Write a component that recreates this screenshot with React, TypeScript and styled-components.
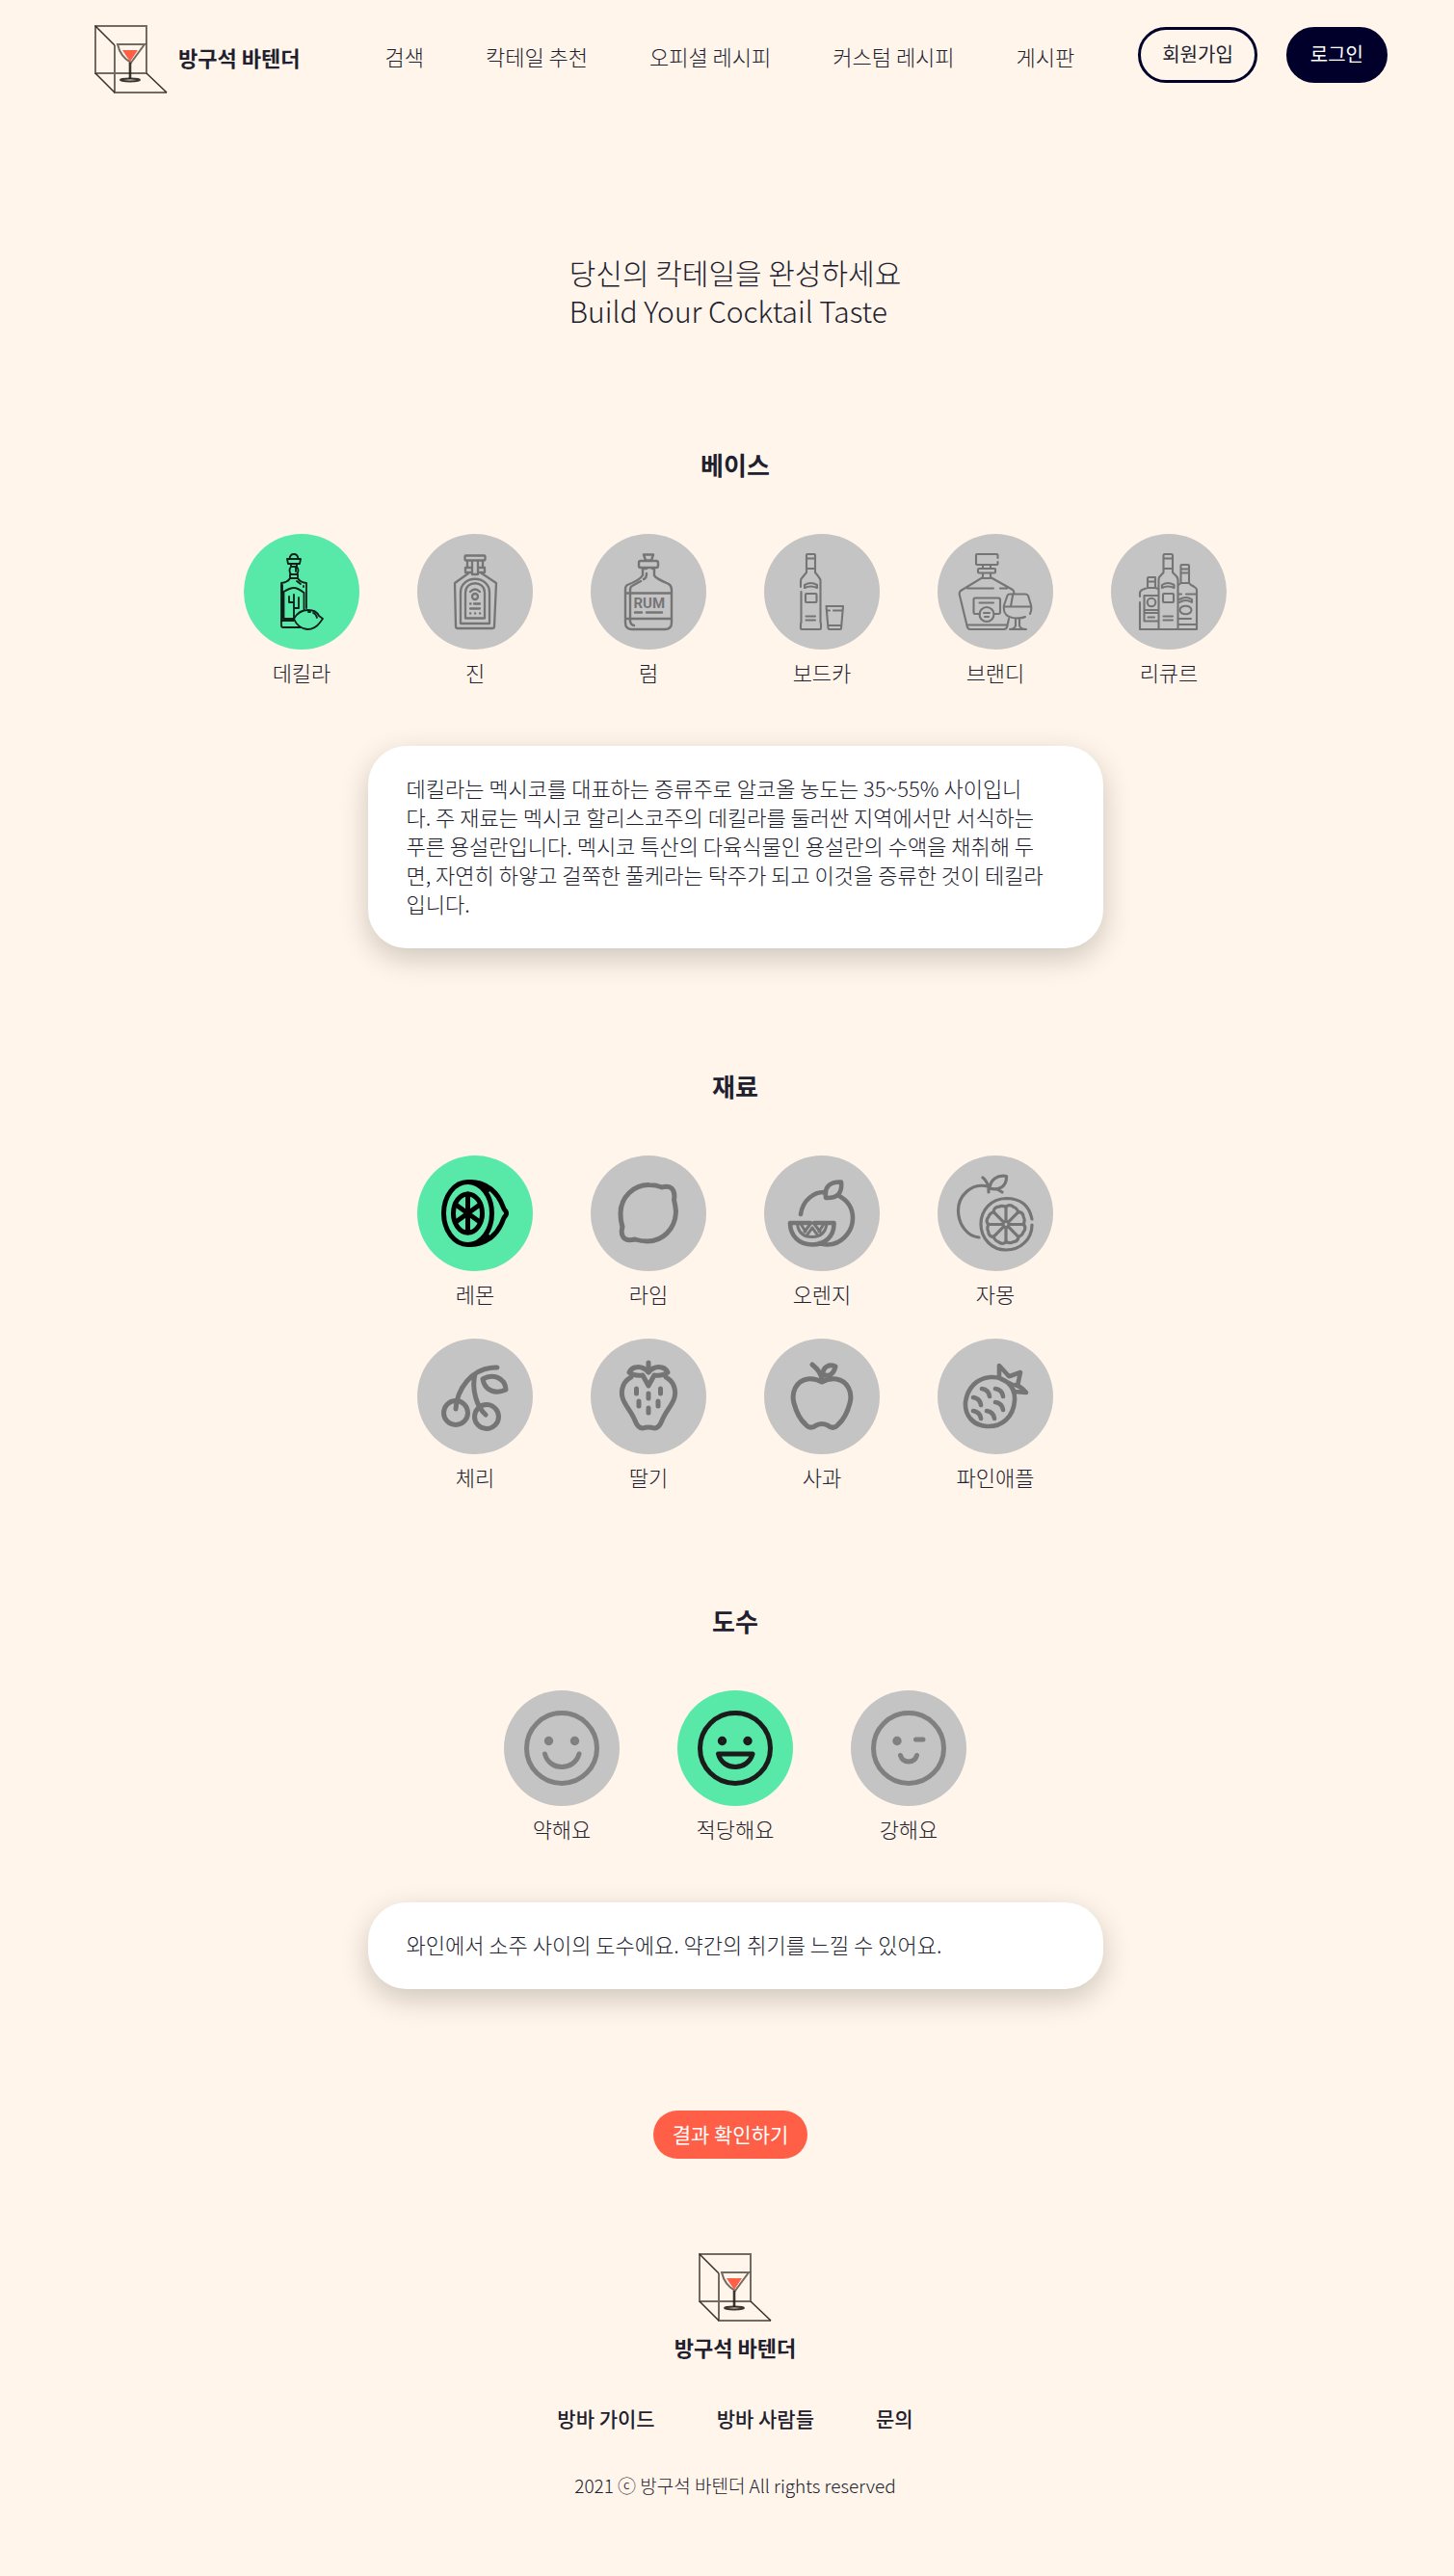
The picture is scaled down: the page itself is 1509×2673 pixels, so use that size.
import React, { useState } from "react";
import styled, { createGlobalStyle } from "styled-components";

const color = {
  page: "#fff5ea",
  ink: "#20202e",
  navy: "#00002b",
  coral: "#ff5f47",
  mint: "#58e9a9",
  idle: "#c4c4c4",
};

const GlobalStyle = createGlobalStyle`
  *, *::before, *::after { box-sizing: border-box; }
  body {
    margin: 0;
    background: ${color.page};
    color: ${color.ink};
    font-family: "Noto Sans CJK KR", "Noto Sans", sans-serif;
    font-size: 20px;
    font-weight: 300;
    line-height: 30px;
  }
  a { color: inherit; text-decoration: none; }
  button { font: inherit; color: inherit; cursor: pointer; }
  h1, h2, p, ul { margin: 0; padding: 0; }
`;

const Header = styled.header`
  display: flex;
  align-items: flex-start;
  padding: 26px 69px 0 98px;
`;

const Brand = styled.a`
  display: flex;
  align-items: center;
  gap: 10px;
  font-size: 22px;
  font-weight: 700;
  line-height: 30px;
  white-space: nowrap;
`;

const BrandName = styled.span`
  padding-bottom: 6px;
`;

const MainNav = styled.nav`
  display: flex;
  gap: 64px;
  margin-left: 88px;
  font-size: 22px;
  line-height: 64px;
  white-space: nowrap;
`;

const Actions = styled.div`
  display: flex;
  gap: 30px;
  margin-top: 2px;
  margin-left: auto;
`;

const PillButton = styled.button<{ $filled?: boolean }>`
  height: 58px;
  padding: 0 22px 2px;
  border: 3px solid ${color.navy};
  border-radius: 30px;
  background: ${(p) => (p.$filled ? color.navy : "transparent")};
  color: ${(p) => (p.$filled ? "#fff" : color.ink)};
  font-size: 20px;
  font-weight: 400;
  white-space: nowrap;
`;

const Main = styled.main`
  display: flex;
  flex-direction: column;
  align-items: center;
  padding-left: 17px;
`;

const Title = styled.h1`
  margin-top: 164px;
  font-size: 30px;
  font-weight: 300;
  line-height: 40px;
`;

const Section = styled.section<{ $space: number }>`
  display: flex;
  flex-direction: column;
  align-items: center;
  width: 100%;
  margin-top: ${(p) => p.$space}px;
`;

const Heading = styled.h2`
  margin-bottom: 52px;
  font-size: 26px;
  font-weight: 700;
  line-height: 40px;
`;

const Choices = styled.div<{ $columns: number }>`
  display: grid;
  grid-template-columns: repeat(${(p) => p.$columns}, 120px);
  gap: 30px 60px;
`;

const Choice = styled.button`
  display: flex;
  flex-direction: column;
  align-items: center;
  gap: 8px;
  padding: 0 0 2px;
  border: 0;
  background: none;
  font-size: 22px;
  line-height: 30px;
  white-space: nowrap;
`;

const Disc = styled.span<{ $on: boolean }>`
  display: block;
  width: 120px;
  height: 120px;
  border-radius: 50%;
  background: ${(p) => (p.$on ? color.mint : color.idle)};

  svg {
    display: block;
    opacity: ${(p) => (p.$on ? 1 : 0.4)};
  }
`;

const Card = styled.p`
  width: 100%;
  max-width: 763px;
  margin-top: 60px;
  padding: 28px 40px 32px;
  border-radius: 40px;
  background: #fff;
  box-shadow: 0 10px 30px rgba(0, 0, 0, 0.2);
  font-size: 22px;
  white-space: pre-line;
`;

const ResultButton = styled.button`
  height: 50px;
  margin-top: 126px;
  margin-right: 10px;
  padding: 0 20px 2px;
  border: 0;
  border-radius: 25px;
  background: ${color.coral};
  color: #fff;
  font-size: 21px;
  font-weight: 400;
`;

const Footer = styled.footer`
  display: flex;
  flex-direction: column;
  align-items: center;
  padding: 98px 0 79px 17px;
`;

const FooterName = styled.strong`
  margin-top: 10px;
  font-size: 22px;
  font-weight: 700;
`;

const FooterNav = styled.nav`
  display: flex;
  gap: 64px;
  margin-top: 44px;
  font-size: 21px;
  font-weight: 500;
`;

const Copyright = styled.small`
  margin-top: 40px;
  font-size: 19px;
`;

const Logo = () => (
  <svg width="77" height="72" viewBox="0 0 77 72" fill="none" stroke="#27211c" strokeOpacity="0.65" strokeWidth="2" aria-hidden="true">
    <path d="M1 1H54V50H1ZM21 21V70H75" />
    <path d="M1 1L21 21M1 50L21 70M54 50L75 70" strokeWidth="1.600" strokeOpacity="0.9" />
    <path d="M24 20H52L38 39Q27 33 24 20Z" />
    <path d="M29 26H45L37 38Z" fill={color.coral} stroke="none" />
    <path d="M37 39V56" strokeWidth="2.600" strokeOpacity="0.9" />
    <ellipse cx="37" cy="57" rx="10" ry="1.400" strokeOpacity="0.9" />
  </svg>
);

const Icon = ({ weight, tone = "#000", children }: { weight: number; tone?: string; children: React.ReactNode }) => (
  <svg
    width="120"
    height="120"
    viewBox="0 0 120 120"
    fill="none"
    stroke={tone}
    strokeWidth={weight}
    strokeLinecap="round"
    strokeLinejoin="round"
    aria-hidden="true"
  >
    {children}
  </svg>
);

const Tequila = () => (
  <Icon weight={1.800} tone="#0b2019">
    <path d="M47.500 26Q48 21 52 21T56.500 26M45 26H59L58 31H46ZM49 31V34M55 31V34M49 34Q46 38 49 42H55Q58 38 55 34ZM54 35V39" />
    <path d="M48 42V46Q46 50 39 51V95Q39 97 41 97H59M56 42V46Q58 50 65 51V77M48 46H56M55 49L59 52M62 54V55" />
    <path d="M62.500 78V61Q56 56 52 56Q48 56 41.500 60V88H52M52 63V87M47 65V71H52M57 66V77H52M39 90H52M40 53V88" />
    <path d="M52 88Q57 79 67 79Q75 79 78 85L82 88L79 92Q74 99 66 99Q56 98 52 88ZM67 81H69M72 82Q75 83 76 87" />
  </Icon>
);

const Gin = () => (
  <Icon weight={2.300}>
    <rect x="49.500" y="22.500" width="21" height="5" rx="1" />
    <path d="M52 28V35M68 28V35M57 28V42H63V28M57 35H50V40H57M63 35H70V40H63" />
    <path d="M53 41L39 51L40 96Q40 98 42 98H78Q80 98 80 96L82 51L67 41" />
    <path d="M45 93V61C45 42 75 42 75 61V93Z" />
    <path d="M50 87.500V61C50 48 70 48 70 61V87.500Z" />
    <path d="M55 60Q60 55 65 60M55 72.500H55.500M59 72.500H65M55 77.500H65M55 82.500H55.200M60 82.500H60.200M65 82.500H65.200" />
    <circle cx="60" cy="65" r="3" />
  </Icon>
);

const Rum = () => (
  <Icon weight={2.400}>
    <path d="M55 21.500H65L63 27.500H57ZM52 28H68Q70 28 70 30V33Q70 35 68 35H52Q50 35 50 33V30Q50 28 52 28Z" />
    <path d="M54 36V43Q51 48 38 53Q36 54 36 58V92Q36 99 43 99H77Q84 99 84 92V58Q84 54 81 52Q67 46 66 43V36H64M36 61.500H84M36 88H84M56 36H58" />
    <path d="M58 41Q58 46 55 47M52 49L43 54Q41 55 41 58V91Q42 95 45 95M46 81.500H53M58 81.500H74" />
    <text x="44.500" y="77" fontFamily="Roboto, sans-serif" fontSize="15" fontWeight="700" fill="#000" stroke="none">RUM</text>
  </Icon>
);

const Vodka = () => (
  <Icon weight={2.100}>
    <path d="M44 36V22Q44 21 45 21H52Q53 21 53 22V36ZM44 25.500H53M44 36V40L39 46Q38 47 38 49V55M38.500 60V92L38 93V98Q38 99 39 99H58Q59 99 59 98V93L58.500 92V48Q58 46 53 40V36" />
    <path d="M42 53Q48.500 49 55 53V56Q48.500 53 42 56Z" />
    <rect x="43" y="62" width="11.500" height="9" rx="1" />
    <path d="M43.500 85.500H53M43.500 89.500H53M64.500 75H82L80 98Q80 99 79 99H67.500L66.500 98L64.500 75M66 79.500H68M72 79.500H81M67 95H80" />
  </Icon>
);

const Brandy = () => (
  <Icon weight={2.100}>
    <path d="M62.500 25V22Q62.500 21 61 21H41Q40 21 40 22V31Q40 32 41 32H61.500Q62.500 32 62.500 31V29M47 32V36M55 32V36" />
    <rect x="42" y="36" width="18" height="4.500" rx="1" />
    <path d="M47 41V45L24 59Q22 61 23 64L31 97Q32 99 34 99H69Q71 99 72 97L74 88M55 41V45L78 58Q80 60 79 62M47 46H55M31 56.500H58M65 56.500H72M31 94.500H72" />
    <path d="M44 83H39Q37.500 83 37.500 81V68Q37.500 66.500 39 66.500H63Q65 66.500 65 68V81Q65 83 63 83H59M43.500 71.500H58" />
    <circle cx="51" cy="83.500" r="7.500" />
    <path d="M48 82H54M49 86H53M96 83Q98 79 97 74L94 64Q93 62.500 91 62.500H75Q73 62.500 72.500 64L69 74Q67 87 82 87.500Q88 87.500 91 86M69 75.500H97M78 64L76 75M81 88V95Q80 99 75 99H92Q86 99 85 95V88" />
  </Icon>
);

const Liqueur = () => (
  <Icon weight={2.100}>
    <path d="M54.500 36V22Q54.500 21 56 21H62.500Q64 21 64 22V36ZM54.500 25.500H64M54.500 36V40L50 45Q49.500 46 49.500 48V98M64 36V40L68 44Q69.500 46 69.500 48V98" />
    <path d="M53 53Q59 49 65.500 53V56Q59 53 53 56Z" />
    <rect x="54" y="62" width="11" height="9" rx="1" />
    <path d="M54.500 85.500H64M54.500 89.500H64M38 56V46Q38 45 39 45H46V56ZM38 49.500H46M38 56Q30 58 30 61V65M30 71V99H89V58Q89 56 83 53L81 51V33Q81 32 80 32H73.500Q72.500 32 72.500 33V51L70 53M72.500 36.500H81M72.500 40.500H81M72.500 51H81M46 56L49 57" />
    <path d="M49 64H34.500V90.500H49M34.500 79H49M34.500 82H49M38.500 86.500H45M70 62.500H73M78 62.500H89M70 88H83M70 94H89M71 68Q78 64 84 68V71Q78 67 71 71" />
    <circle cx="42" cy="71" r="4.300" />
    <ellipse cx="77.500" cy="79" rx="6" ry="4.300" />
  </Icon>
);

const Lemon = () => (
  <Icon weight={5}>
    <ellipse cx="52.500" cy="60" rx="25" ry="32.500" />
    <ellipse cx="52.500" cy="60" rx="15" ry="20" />
    <path d="M52.500 40V80M40 51L65 69M65 51L40 69" />
    <path d="M54 27.500C72 27 84 39 89 53Q90 56 92 58Q93 60 92 62Q90 64 89 67C84 81 72 93 54 92.500" />
    <path d="M64 29Q69 31 73 36M64 91Q69 89 73 84" />
  </Icon>
);

const Lime = () => (
  <Icon weight={5}>
    <path d="M61 30.500Q68 30.500 74 33Q80 31 84 34Q88 38 86.500 46Q88 52 88.500 58C88 77 74 89 59 89Q52 89 46 87Q37 89 34 85Q31 81 33 74Q31 68 31 60C31 43 45 30 61 30.500Z" />
  </Icon>
);

const Orange = () => (
  <Icon weight={4.600}>
    <path d="M38 61C40 46 52 38 62 38M78 42C87 47 92 55 92 65C92 80 79 93 65 92.500Q61 92.500 58 91M64 43Q62 27 80 27.500Q82 45 64 44M27 70H48M52 70H72.500C73 84 63 92.500 50 92.500C36 92.500 27 83 27 70" />
    <path d="M34.500 71Q36 84.500 50 84.500Q63 84.500 65 71M48 71L42 79M52 71L58 79M38 71L43 79M62 71L57 79M50 75L45 82M50 75L55 82" strokeWidth="3" />
  </Icon>
);

const Grapefruit = () => (
  <Icon weight={3.200}>
    <path d="M52 32C35 28 21 42 21.500 58C22 72 31 84 43 85M98 66C95 51 85 44.500 71 44.500C56 45 45 56 45 71C45 87 57 98 71 98C86 98 98 87 98 72M53 38V32Q50 25 47 23M54 34C55 25 62 20 71.500 21.500C72 31 65 37 54 34ZM62 35L67 38" />
    {[0, 45, 90, 135, 180, 225, 270, 315].map((angle) => (
      <path key={angle} transform={`rotate(${angle} 71 71.500)`} d="M71 68V53M71 53Q75 50 79 53.500Q82 54 84 59" />
    ))}
    <circle cx="71" cy="71.500" r="3" />
  </Icon>
);

const Cherry = () => (
  <Icon weight={5}>
    <circle cx="40" cy="77" r="12.500" />
    <circle cx="72" cy="81" r="12.500" />
    <path d="M40 73C41 55 55 29 83 30M60 37C56 53 62 71 71 79M68 42C78 36 91 40 92 53C81 58 70 54 68 42Z" />
  </Icon>
);

const Strawberry = () => (
  <Icon weight={5}>
    <path d="M42 40C34 44 31 53 33 61C35 69 42 75 46 85Q49 93 54 93Q60 91 66 93Q71 93 74 85C78 75 85 69 87 61C89 53 86 44 78 40M60 25V35M60 35Q54 28 46 30Q42 31 40 35Q45 39 54 38L60 49L66 38Q75 39 80 35Q78 31 74 30Q66 28 60 35Z" />
    <path d="M47.500 52V57M60 57V62M72.500 52V57M50 65V70M70 65V70M60 72V77" />
  </Icon>
);

const Apple = () => (
  <Icon weight={5}>
    <path d="M60 45Q53 41 45 42C33 44 28 56 31 67Q35 82 43 89Q48 95 54 90Q60 87 66 90Q72 95 77 89Q85 82 89 67C92 56 87 44 75 42Q67 41 60 45ZM60 45Q61 36 50 27M61 37C61 29 68 26 74 29C72 38 66 40 61 37Z" />
  </Icon>
);

const Pineapple = () => (
  <Icon weight={4.600}>
    <path d="M55 40C70 39 81 50 80 64C79 81 67 92 51 91C37 90 28 80 29 66C31 51 41 41 55 40ZM64 41V28L74 39M75 39L86 35L83 49M64 41L74 46L80 55L92 56Q87 50 81 48M78 48L74 46" />
    <path d="M46 52Q53 53 54 60M60 52Q67 53 68 60M37 61Q44 62 45 69M60 66Q67 67 68 74M37 75Q44 76 45 83M51 75Q58 76 59 83" />
  </Icon>
);

const Face = ({ children }: { children: React.ReactNode }) => (
  <Icon weight={5} tone="#1b1b1b">
    <circle cx="60" cy="60" r="36.500" />
    {children}
  </Icon>
);

const Smile = () => (
  <Face>
    <path d="M42.500 66C47 84 73 84 78 66" />
    <circle cx="46.500" cy="52.500" r="2.200" />
    <circle cx="73.500" cy="52.500" r="2.200" />
  </Face>
);

const Grin = () => (
  <Face>
    <path d="M42.500 66H78C73 84 47 84 42.500 66Z" />
    <circle cx="46.500" cy="52.500" r="2.200" />
    <circle cx="73" cy="52.500" r="2.200" />
  </Face>
);

const Wink = () => (
  <Face>
    <path d="M51.500 67.500C54 76 66 76 68.500 67.500M67.500 51H75" />
    <circle cx="48" cy="52.500" r="2.200" />
  </Face>
);

type Option = { name: string; icon: React.ComponentType };

const bases: Option[] = [
  { name: "데킬라", icon: Tequila },
  { name: "진", icon: Gin },
  { name: "럼", icon: Rum },
  { name: "보드카", icon: Vodka },
  { name: "브랜디", icon: Brandy },
  { name: "리큐르", icon: Liqueur },
];

const ingredients: Option[] = [
  { name: "레몬", icon: Lemon },
  { name: "라임", icon: Lime },
  { name: "오렌지", icon: Orange },
  { name: "자몽", icon: Grapefruit },
  { name: "체리", icon: Cherry },
  { name: "딸기", icon: Strawberry },
  { name: "사과", icon: Apple },
  { name: "파인애플", icon: Pineapple },
];

const strengths: Option[] = [
  { name: "약해요", icon: Smile },
  { name: "적당해요", icon: Grin },
  { name: "강해요", icon: Wink },
];

const tequilaNote = [
  "데킬라는 멕시코를 대표하는 증류주로 알코올 농도는 35~55% 사이입니",
  "다. 주 재료는 멕시코 할리스코주의 데킬라를 둘러싼 지역에서만 서식하는",
  "푸른 용설란입니다. 멕시코 특산의 다육식물인 용설란의 수액을 채취해 두",
  "면, 자연히 하얗고 걸쭉한 풀케라는 탁주가 되고 이것을 증류한 것이 테킬라",
  "입니다.",
].join("\n");

const Picker = ({ options, columns, initial }: { options: Option[]; columns: number; initial: string }) => {
  const [picked, setPicked] = useState(initial);
  return (
    <Choices $columns={columns}>
      {options.map(({ name, icon: Drawing }) => (
        <Choice key={name} type="button" aria-pressed={picked === name} onClick={() => setPicked(name)}>
          <Disc $on={picked === name}>
            <Drawing />
          </Disc>
          {name}
        </Choice>
      ))}
    </Choices>
  );
};

export default function App() {
  return (
    <>
      <GlobalStyle />
      <Header>
        <Brand href="#">
          <Logo />
          <BrandName>방구석 바텐더</BrandName>
        </Brand>
        <MainNav>
          <a href="#search">검색</a>
          <a href="#recommend">칵테일 추천</a>
          <a href="#official">오피셜 레시피</a>
          <a href="#custom">커스텀 레시피</a>
          <a href="#board">게시판</a>
        </MainNav>
        <Actions>
          <PillButton type="button">회원가입</PillButton>
          <PillButton type="button" $filled>로그인</PillButton>
        </Actions>
      </Header>
      <Main>
        <Title>
          당신의 칵테일을 완성하세요
          <br />
          Build Your Cocktail Taste
        </Title>
        <Section $space={120}>
          <Heading>베이스</Heading>
          <Picker options={bases} columns={6} initial="데킬라" />
          <Card>{tequilaNote}</Card>
        </Section>
        <Section $space={123}>
          <Heading>재료</Heading>
          <Picker options={ingredients} columns={4} initial="레몬" />
        </Section>
        <Section $space={113}>
          <Heading>도수</Heading>
          <Picker options={strengths} columns={3} initial="적당해요" />
          <Card>와인에서 소주 사이의 도수에요. 약간의 취기를 느낄 수 있어요.</Card>
        </Section>
        <ResultButton type="button">결과 확인하기</ResultButton>
      </Main>
      <Footer>
        <Logo />
        <FooterName>방구석 바텐더</FooterName>
        <FooterNav>
          <a href="#guide">방바 가이드</a>
          <a href="#people">방바 사람들</a>
          <a href="#contact">문의</a>
        </FooterNav>
        <Copyright>2021 ⓒ 방구석 바텐더 All rights reserved</Copyright>
      </Footer>
    </>
  );
}
